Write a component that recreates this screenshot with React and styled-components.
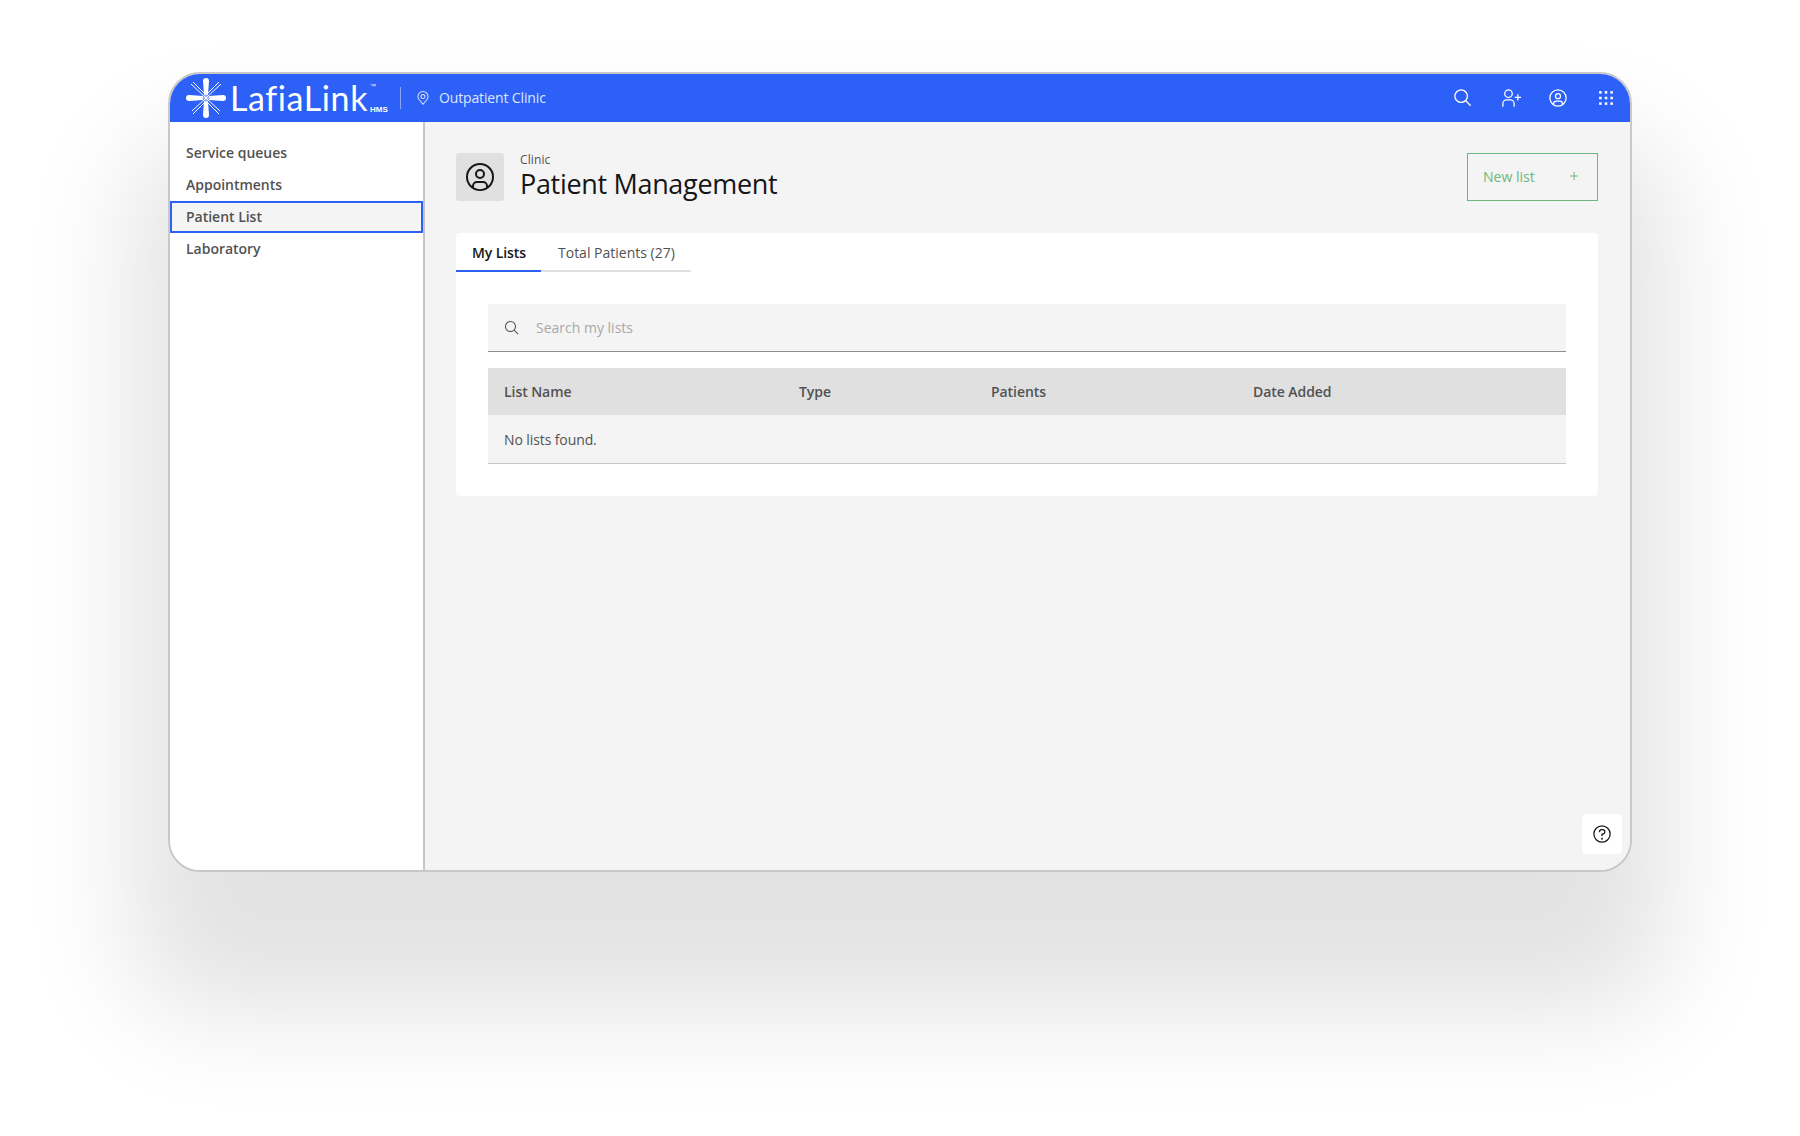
import React from 'react';
import styled, { createGlobalStyle } from 'styled-components';

const GlobalStyle = createGlobalStyle`
  html, body {
    margin: 0;
    padding: 0;
    background: #ffffff;
    font-family: "Open Sans", "Noto Sans", Arial, sans-serif;
  }
  * {
    box-sizing: border-box;
  }
`;

const Page = styled.div`
  width: 1800px;
  height: 1136px;
  padding: 72px 0 0 168px;
  overflow: hidden;
  background: #ffffff;
`;

const Frame = styled.div`
  position: relative;
  width: 1464px;
  height: 800px;
  display: flex;
  flex-direction: column;
  background: #f4f4f4;
  border: 2px solid #c8c8c8;
  border-radius: 32px;
  box-shadow: 0 104px 110px 36px rgba(0, 0, 0, 0.115);
`;

const TopBar = styled.header`
  height: 48px;
  flex: none;
  display: flex;
  align-items: center;
  border-radius: 30px 30px 0 0;
  background: #2d60f6;
  color: #ffffff;
`;

const Brand = styled.div`
  display: flex;
  align-items: center;
  width: 230px;
  padding-left: 15px;
`;

const Wordmark = styled.span`
  font-family: "Lato", "Noto Sans", sans-serif;
  font-size: 34px;
  line-height: 48px;
  font-weight: 400;
  letter-spacing: 0.6px;
  margin-left: 3px;
`;

const BrandTags = styled.span`
  display: flex;
  flex-direction: column;
  justify-content: space-between;
  align-self: stretch;
  padding: 9px 0 8px 2px;
  line-height: 1;
`;

const Tm = styled.span`
  font-family: "Liberation Sans", sans-serif;
  font-size: 6px;
`;

const Hms = styled.span`
  font-family: "Liberation Sans", sans-serif;
  font-size: 8px;
  font-weight: 700;
`;

const BarDivider = styled.div`
  width: 1px;
  height: 22px;
  background: rgba(255, 255, 255, 0.45);
  margin-right: 14px;
`;

const LocationTag = styled.div`
  display: flex;
  align-items: center;
  gap: 8px;
  padding-bottom: 1px;
  font-size: 14px;
  letter-spacing: -0.14px;
  color: #dde6ff;
`;

const BarActions = styled.div`
  margin-left: auto;
  display: flex;
`;

const BarButton = styled.button`
  width: 48px;
  height: 48px;
  display: flex;
  align-items: center;
  justify-content: center;
  padding: ${(p) => (p.$nudge ? '0 0 0 2px' : '0')};
  border: none;
  background: transparent;
  color: #ffffff;
`;

const Body = styled.div`
  flex: 1;
  min-height: 0;
  display: flex;
  border-radius: 0 0 30px 30px;
  overflow: hidden;
`;

const SideNav = styled.nav`
  width: 255px;
  flex: none;
  padding-top: 15px;
  background: #ffffff;
  border-right: 2px solid #c6c6c6;
`;

const NavItem = styled.a`
  display: flex;
  align-items: center;
  height: 32px;
  padding-left: ${(p) => (p.$active ? '14px' : '16px')};
  padding-bottom: ${(p) => (p.$active ? '1px' : '2px')};
  font-size: 14px;
  font-weight: 600;
  letter-spacing: -0.02px;
  color: #525252;
  background: ${(p) => (p.$active ? '#f4f4f4' : 'transparent')};
  border: ${(p) => (p.$active ? '2px solid #2d60f6' : 'none')};
`;

const Main = styled.main`
  position: relative;
  flex: 1;
  min-width: 0;
  padding: 31px 32px 0 31px;
  background: #f4f4f4;
`;

const PageHeader = styled.div`
  display: flex;
  align-items: center;
  height: 48px;
  margin-bottom: 32px;
`;

const IconTile = styled.div`
  width: 48px;
  height: 48px;
  flex: none;
  display: flex;
  align-items: center;
  justify-content: center;
  border-radius: 3px;
  background: #e0e0e0;
  color: #161616;
`;

const TitleBlock = styled.div`
  display: flex;
  flex-direction: column;
  margin: 0 0 2px 16px;
`;

const Crumb = styled.span`
  font-size: 12px;
  line-height: 12px;
  letter-spacing: 0.1px;
  color: #525252;
  padding-top: 3px;
`;

const Title = styled.h1`
  margin: 0;
  font-size: 27px;
  line-height: 35px;
  font-weight: 400;
  letter-spacing: -0.32px;
  color: #161616;
`;

const NewButton = styled.button`
  margin-left: auto;
  width: 131px;
  height: 48px;
  display: flex;
  align-items: center;
  justify-content: space-between;
  padding: 0 15px 2px 15px;
  background: transparent;
  border: 1px solid #6cb77b;
  font-family: inherit;
  font-size: 14px;
  letter-spacing: 0;
  color: #6cb77b;
`;

const Card = styled.section`
  height: 263px;
  border-radius: 4px;
  background: #ffffff;
`;

const Tabs = styled.div`
  display: flex;
  height: 39px;
`;

const Tab = styled.div`
  width: ${(p) => p.$width}px;
  display: flex;
  align-items: center;
  padding: 2px 0 0 ${(p) => (p.$active ? 16 : 17)}px;
  font-size: 14px;
  font-weight: ${(p) => (p.$active ? 600 : 400)};
  letter-spacing: ${(p) => (p.$active ? '-0.1px' : '0')};
  color: ${(p) => (p.$active ? '#161616' : '#525252')};
  border-bottom: 2px solid ${(p) => (p.$active ? '#2d60f6' : '#e0e0e0')};
`;

const CardBody = styled.div`
  padding: 32px 32px 0;
`;

const SearchBox = styled.div`
  height: 48px;
  display: flex;
  align-items: center;
  gap: 16px;
  padding-left: 16px;
  background: #f4f4f4;
  border-bottom: 1px solid #8d8d8d;
  color: #525252;
`;

const SearchText = styled.span`
  font-size: 14px;
  letter-spacing: 0;
  color: #a8a8a8;
`;

const TableHead = styled.div`
  display: grid;
  grid-template-columns: 295px 192px 262px 1fr;
  height: 47px;
  margin-top: 16px;
  background: #e0e0e0;
`;

const HeadCell = styled.div`
  display: flex;
  align-items: center;
  padding-left: 16px;
  font-size: 14px;
  font-weight: 600;
  letter-spacing: -0.06px;
  color: #525252;
`;

const EmptyRow = styled.div`
  height: 49px;
  display: flex;
  align-items: center;
  padding-left: 16px;
  background: #f4f4f4;
  border-bottom: 1px solid #c6c6c6;
  font-size: 14px;
  letter-spacing: -0.1px;
  color: #525252;
`;

const HelpButton = styled.button`
  position: absolute;
  right: 8px;
  bottom: 16px;
  width: 40px;
  height: 40px;
  display: flex;
  align-items: center;
  justify-content: center;
  padding: 0;
  border: none;
  border-radius: 4px;
  background: #ffffff;
  color: #161616;
`;

const Carbon = ({ size = 20, children }) => (
  <svg width={size} height={size} viewBox="0 0 32 32" fill="currentColor">
    {children}
  </svg>
);

const SearchIcon = ({ size }) => (
  <Carbon size={size}>
    <path d="M29,27.5859l-7.5521-7.5521a11.0177,11.0177,0,1,0-1.4141,1.4141L27.5859,29ZM4,13a9,9,0,1,1,9,9A9.01,9.01,0,0,1,4,13Z" />
  </Carbon>
);

const UserAvatarIcon = ({ size }) => (
  <Carbon size={size}>
    <path d="M16,8a5,5,0,1,0,5,5A5,5,0,0,0,16,8Zm0,8a3,3,0,1,1,3-3A3.0034,3.0034,0,0,1,16,16Z" />
    <path d="M16,2A14,14,0,1,0,30,16,14.0158,14.0158,0,0,0,16,2ZM10,26.3765V25a3.0033,3.0033,0,0,1,3-3h6a3.0033,3.0033,0,0,1,3,3v1.3765a11.8989,11.8989,0,0,1-12,0Zm13.9925-1.4507A5.0016,5.0016,0,0,0,19,20H13a5.0016,5.0016,0,0,0-4.9925,4.9258,12,12,0,1,1,15.985,0Z" />
  </Carbon>
);

const UserFollowIcon = ({ size }) => (
  <Carbon size={size}>
    <path d="M32 14L28 14 28 10 26 10 26 14 22 14 22 16 26 16 26 20 28 20 28 16 32 16 32 14z" />
    <path d="M12,4A5,5,0,1,1,7,9a5,5,0,0,1,5-5m0-2a7,7,0,1,0,7,7A7,7,0,0,0,12,2Z" />
    <path d="M22,30H20V25a5,5,0,0,0-5-5H9a5,5,0,0,0-5,5v5H2V25a7,7,0,0,1,7-7h6a7,7,0,0,1,7,7Z" />
  </Carbon>
);

const SwitcherIcon = ({ size }) => (
  <Carbon size={size}>
    {[5, 14, 23].map((y) =>
      [5, 14, 23].map((x) => <rect key={`${x}-${y}`} x={x} y={y} width="4" height="4" />)
    )}
  </Carbon>
);

const LocationIcon = ({ size }) => (
  <Carbon size={size}>
    <path d="M16,18a5,5,0,1,1,5-5A5.0057,5.0057,0,0,1,16,18Zm0-8a3,3,0,1,0,3,3A3.0033,3.0033,0,0,0,16,10Z" />
    <path d="M16,30,7.5645,20.0513c-.0479-.0571-.3482-.4515-.3482-.4515A10.8888,10.8888,0,0,1,5,13a11,11,0,0,1,22,0,10.8844,10.8844,0,0,1-2.2148,6.5973l-.0015.0025s-.3.3944-.3447.4474ZM8.8125,18.395c.001.0007.2334.3082.2866.3744L16,26.9079l6.91-8.15c.0439-.0552.2783-.3649.2788-.3657A8.901,8.901,0,0,0,25,13,9,9,0,1,0,7,13a8.9054,8.9054,0,0,0,1.8125,5.395Z" />
  </Carbon>
);

const HelpIcon = ({ size }) => (
  <Carbon size={size}>
    <path d="M16,2A14,14,0,1,0,30,16,14,14,0,0,0,16,2Zm0,26A12,12,0,1,1,28,16,12,12,0,0,1,16,28Z" />
    <circle cx="16" cy="23.5" r="1.5" />
    <path d="M17,8H15.5A4.49,4.49,0,0,0,11,12.5V13h2v-.5A2.5,2.5,0,0,1,15.5,10H17a2.5,2.5,0,0,1,0,5H15v4.5h2V17a4.5,4.5,0,0,0,0-9Z" />
  </Carbon>
);

const AddIcon = ({ size }) => (
  <Carbon size={size}>
    <path d="M17 15L17 8 15 8 15 15 8 15 8 17 15 17 15 24 17 24 17 17 24 17 24 15 17 15z" />
  </Carbon>
);

const LogoMark = () => (
  <svg width="42" height="42" viewBox="0 0 42 42" fill="none">
    <path d="M18 4a3 3 0 0 1 6 0l-1 14h-4z M18 38a3 3 0 0 0 6 0l-1-14h-4z" fill="#fff" />
    <path d="M4 18a3 3 0 0 0 0 6l14-1v-4z M38 18a3 3 0 0 1 0 6l-14-1v-4z" fill="#fff" />
    <path d="M6 7 L21 21 L35 34 M36 7 L21 21 L7 34 M8 5 L21 18 M34 5 L21 18 M8 37 L21 24 M34 37 L21 24" stroke="#fff" strokeWidth="1" />
    <path d="M17 21 L21 17 L25 21 L21 25z" fill="#9db8ff" />
    <path d="M18 18 L24 24 M24 18 L18 24" stroke="#fff" strokeWidth="1" />
  </svg>
);

const App = () => (
  <>
    <GlobalStyle />
    <Page>
      <Frame>
        <TopBar>
          <Brand>
            <LogoMark />
            <Wordmark>LafiaLink</Wordmark>
            <BrandTags>
              <Tm>™</Tm>
              <Hms>HMS</Hms>
            </BrandTags>
          </Brand>
          <BarDivider />
          <LocationTag>
            <LocationIcon size={16} />
            Outpatient Clinic
          </LocationTag>
          <BarActions>
            <BarButton $nudge><SearchIcon size={20} /></BarButton>
            <BarButton $nudge><UserFollowIcon size={20} /></BarButton>
            <BarButton><UserAvatarIcon size={20} /></BarButton>
            <BarButton><SwitcherIcon size={20} /></BarButton>
          </BarActions>
        </TopBar>
        <Body>
          <SideNav>
            <NavItem>Service queues</NavItem>
            <NavItem>Appointments</NavItem>
            <NavItem $active>Patient List</NavItem>
            <NavItem>Laboratory</NavItem>
          </SideNav>
          <Main>
            <PageHeader>
              <IconTile><UserAvatarIcon size={32} /></IconTile>
              <TitleBlock>
                <Crumb>Clinic</Crumb>
                <Title>Patient Management</Title>
              </TitleBlock>
              <NewButton>
                New list
                <AddIcon size={16} />
              </NewButton>
            </PageHeader>
            <Card>
              <Tabs>
                <Tab $active $width={85}>My Lists</Tab>
                <Tab $width={150}>Total Patients (27)</Tab>
              </Tabs>
              <CardBody>
                <SearchBox>
                  <SearchIcon size={16} />
                  <SearchText>Search my lists</SearchText>
                </SearchBox>
                <TableHead>
                  <HeadCell>List Name</HeadCell>
                  <HeadCell>Type</HeadCell>
                  <HeadCell>Patients</HeadCell>
                  <HeadCell>Date Added</HeadCell>
                </TableHead>
                <EmptyRow>No lists found.</EmptyRow>
              </CardBody>
            </Card>
            <HelpButton><HelpIcon size={20} /></HelpButton>
          </Main>
        </Body>
      </Frame>
    </Page>
  </>
);

export default App;
